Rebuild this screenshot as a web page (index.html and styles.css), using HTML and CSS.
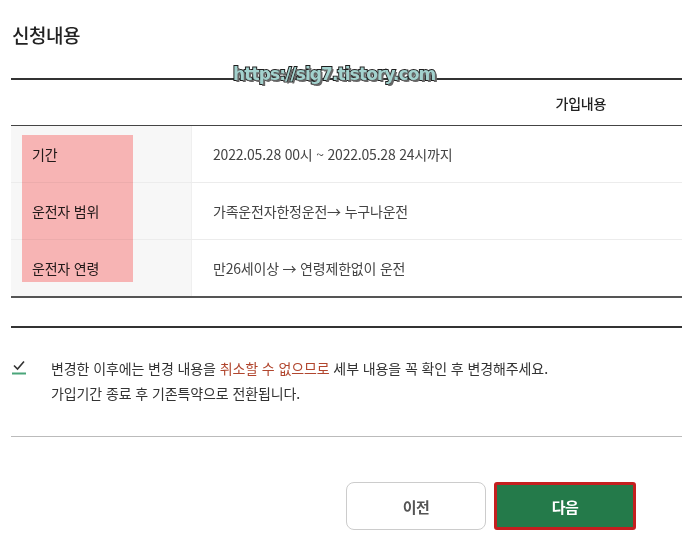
FILE: index.html
```html
<!DOCTYPE html>
<html lang="ko">

<head>
    <meta charset="UTF-8">
    <title>신청내용</title>
    <link rel="stylesheet" href="styles.css">
</head>

<body>
    <div class="page">
        <h2 class="title">신청내용</h2>

        <div class="wrapper">
            <table class="summary">
                <thead>
                    <tr>
                        <th class="col-label"></th>
                        <th class="col-value">가입내용</th>
                    </tr>
                </thead>
                <tbody>
                    <tr>
                        <td class="col-label">기간</td>
                        <td>2022.05.28 00시 ~ 2022.05.28 24시까지</td>
                    </tr>
                    <tr>
                        <td class="col-label">운전자 범위</td>
                        <td>가족운전자한정운전→ 누구나운전</td>
                    </tr>
                    <tr>
                        <td class="col-label">운전자 연령</td>
                        <td>만26세이상 → 연령제한없이 운전</td>
                    </tr>
                </tbody>
            </table>
            <span class="highlight"></span>
            <span class="watermark">https://sig7.tistory.com</span>
        </div>

        <div class="notice">
            <span class="check">
                <svg width="14" height="16" viewBox="0 0 14 16">
                    <path d="M2 6.5 L5.5 10 L12 2.5" fill="none" stroke="#333" stroke-width="1.6" />
                    <rect x="0" y="13.5" width="14" height="2" fill="#4aa57a" />
                </svg>
            </span>
            <p>
                변경한 이후에는 변경 내용을 <em>취소할 수 없으므로</em> 세부 내용을 꼭 확인 후 변경해주세요.<br>
                가입기간 종료 후 기존특약으로 전환됩니다.
            </p>
        </div>

        <div class="actions">
            <button class="btn btn-prev">이전</button>
            <button class="btn btn-next">다음</button>
        </div>
    </div>
</body>

</html>
```

FILE: styles.css
```css
body {
    margin: 0;
    background: #fff;
    font-family: "Noto Sans CJK KR", "Noto Sans", sans-serif;
    color: #333;
}

.page {
    padding: 22px 0 0 11px;
    overflow: hidden;
}

.title {
    margin: 0 0 30px 1px;
    font-size: 19px;
    font-weight: 500;
    line-height: 26px;
    color: #222;
    letter-spacing: -0.5px;
}

.wrapper {
    position: relative;
}

table.summary {
    border-collapse: collapse;
    width: 671px;
    font-size: 14px;
    letter-spacing: -0.2px;
    text-align: left;
}

.summary thead th {
    height: 45px;
    padding: 0;
    border-top: 2px solid #333;
    border-bottom: 1px solid #444;
    font-weight: 500;
    color: #222;
}

.summary thead .col-value {
    padding-left: 364px;
}

.summary td {
    height: 56px;
    padding: 0 0 0 21px;
    border-bottom: 1px solid #ececec;
    color: #444;
}

.summary tbody tr:last-child td {
    border-bottom: 2px solid #555;
}

.summary td.col-label {
    width: 159px;
    background: #f7f7f7;
    border-right: 1px solid #efefef;
    color: #222;
}

/* 강조 표시 (스크린샷 위 덧칠) */
.highlight {
    position: absolute;
    left: 11px;
    top: 57px;
    width: 111px;
    height: 147px;
    background: #ffbaba;
    mix-blend-mode: multiply;
}

.watermark {
    position: absolute;
    left: 222px;
    top: -14px;
    font-family: "DejaVu Sans", sans-serif;
    font-weight: bold;
    font-size: 17px;
    letter-spacing: -0.9px;
    color: #a3d2ce;
    -webkit-text-stroke: 2px #1e1e1e;
    paint-order: stroke fill;
    text-shadow: 2px 2px 0 #666;
}

.notice {
    display: flex;
    gap: 25px;
    margin-top: 28px;
    padding: 28px 0 30px 1px;
    border-top: 2px solid #333;
    border-bottom: 1px solid #bbb;
    font-size: 14px;
    letter-spacing: -0.1px;
}

.check {
    padding-top: 3px;
}

.notice p {
    margin: 0;
    line-height: 25px;
    color: #333;
}

.notice em {
    font-style: normal;
    color: #b1462e;
}

.actions {
    display: flex;
    justify-content: flex-end;
    gap: 8px;
    padding: 45px 46px 0 0;
}

.btn {
    height: 48px;
    font-family: inherit;
    font-size: 15px;
    font-weight: 700;
    letter-spacing: -0.5px;
}

.btn-prev {
    width: 140px;
    border: 1px solid #ccc;
    border-radius: 8px;
    background: #fff;
    color: #555;
}

.btn-next {
    width: 142px;
    border: 3px solid #c41f1f;
    border-radius: 3px;
    background: #247a4a;
    color: #fff;
}
```
